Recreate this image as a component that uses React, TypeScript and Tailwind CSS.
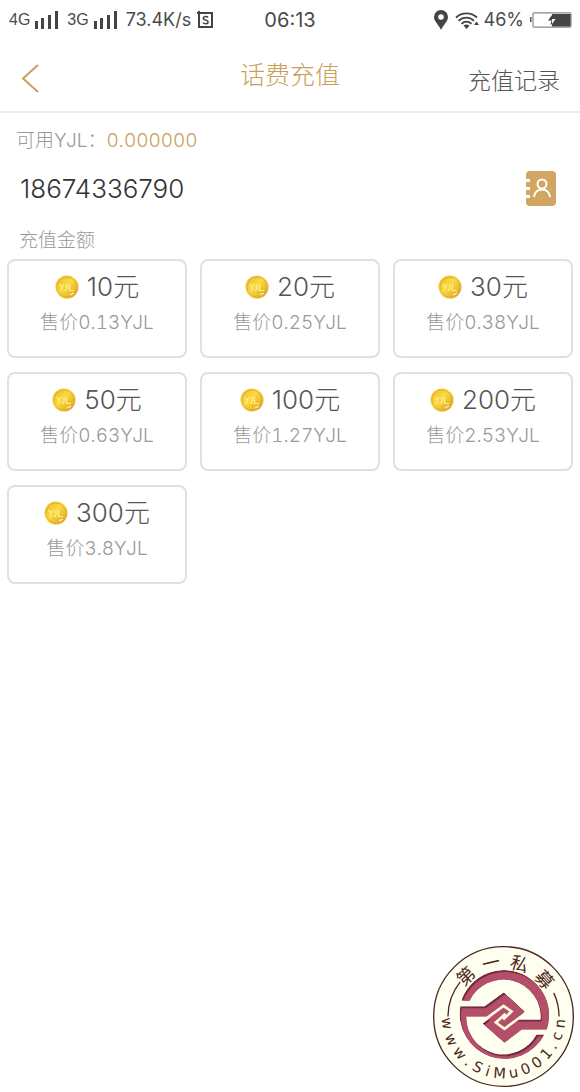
import { useState } from 'react';

const amounts = [
  { value: 10, price: '0.13' },
  { value: 20, price: '0.25' },
  { value: 30, price: '0.38' },
  { value: 50, price: '0.63' },
  { value: 100, price: '1.27' },
  { value: 200, price: '2.53' },
  { value: 300, price: '3.8' },
];

// angle in degrees clockwise from the top of the seal
const sealTop = [
  { char: '第', angle: -43 },
  { char: '一', angle: -13 },
  { char: '私', angle: 17 },
  { char: '募', angle: 48 },
];

// angle in degrees clockwise from the bottom of the seal
const sealBottom = [
  { char: 'w', angle: 83 },
  { char: 'w', angle: 66 },
  { char: 'w', angle: 50 },
  { char: '.', angle: 38 },
  { char: 'S', angle: 27 },
  { char: 'i', angle: 16 },
  { char: 'M', angle: 4 },
  { char: 'u', angle: -10 },
  { char: '0', angle: -23 },
  { char: '0', angle: -36 },
  { char: '1', angle: -49 },
  { char: '.', angle: -59 },
  { char: 'c', angle: -70 },
  { char: 'n', angle: -83 },
];

const SEAL_UPPER =
  'M108 182A135 135 0 0 1 365 268L290 268L238 308L172 250L200 229L250 200L272 238L346 238A112 112 0 0 0 133 182Z';
const SEAL_LOWER =
  'M105 198L178 198L236 156L299 214L255 254L200 229L123 229A112 112 0 0 0 334 283L358 283A135 135 0 0 1 105 198Z';

function Signal() {
  return (
    <svg viewBox="0 0 24 18" className="h-[18px] w-6" fill="#444" aria-hidden="true">
      <rect x="0" y="10" width="3" height="8" />
      <rect x="6" y="7" width="3" height="11" />
      <rect x="13" y="4" width="3" height="14" />
      <rect x="20" y="0" width="3" height="18" />
    </svg>
  );
}

function StatusBar() {
  return (
    <div className="relative flex h-10 items-center justify-between pr-2 pl-[9px] text-lg text-[#4a4a4a]">
      <div className="flex items-center">
        <span className="font-['Liberation_Sans'] text-base">4G</span>
        <span className="ml-[5px]"><Signal /></span>
        <span className="ml-2 font-['Liberation_Sans'] text-base">3G</span>
        <span className="ml-[5px]"><Signal /></span>
        <span className="ml-2">73.4K/s</span>
        <svg viewBox="0 0 17 18" className="ml-1.5 h-[18px] w-[17px]" fill="none" stroke="#444" aria-hidden="true">
          <path d="M0 2H15V16H2V0" strokeWidth="2" />
          <path d="M11 6.500C10 5 6.300 5.100 6.300 7.200C6.300 9.400 11.100 8.600 11.100 11C11.100 13.200 7.100 13.200 6 11.600" strokeWidth="1.600" />
        </svg>
      </div>
      <span className="absolute left-1/2 -translate-x-1/2 text-xl">06:13</span>
      <div className="flex items-center">
        <svg viewBox="0 0 14 20" className="h-5 w-3.5" aria-hidden="true">
          <path d="M7 0A7 7 0 0 0 0 7C0 11.500 5 15 7 20C9 15 14 11.500 14 7A7 7 0 0 0 7 0ZM7 4.200A2.800 2.800 0 1 1 7 9.800A2.800 2.800 0 0 1 7 4.200Z" fill="#444" fillRule="evenodd" />
        </svg>
        <svg viewBox="0 0 25 17" className="ml-[7px] h-[17px] w-[25px]" fill="none" stroke="#444" strokeWidth="1.800" aria-hidden="true">
          <path d="M1 5.500C7 0 16 0 22 5.500M3.500 8.800C8 4.500 15 4.500 19 8.800M6.500 11.800C9.500 9 13.500 9 16.500 11.800" />
          <path d="M8.500 13.500Q11.500 11.500 14.500 13.500L11.500 17ZM19 13L21.500 9.500L24 13Z" fill="#444" stroke="none" />
        </svg>
        <span className="ml-1">46%</span>
        <svg viewBox="0 0 42 16" className="ml-1.5 h-4 w-[42px]" aria-hidden="true">
          <rect x="0" y="5" width="1.500" height="5" fill="#555" />
          <rect x="3" y="0.800" width="38" height="14.400" rx="1.500" fill="#fff" stroke="#888" strokeWidth="1.200" />
          <rect x="22" y="2" width="18.500" height="12.500" fill="#444" />
          <path d="M22 3L18 8.500H21.500L20.500 13L22 12Z" fill="#444" />
          <path d="M22 3.500V7H25.500L22 12Z" fill="#fff" />
        </svg>
      </div>
    </div>
  );
}

function Coin() {
  return (
    <svg viewBox="0 0 24 24" className="h-6 w-6 shrink-0" aria-hidden="true">
      <defs>
        <linearGradient id="coin" x1="0" y1="0" x2="1" y2="1">
          <stop offset="0" stopColor="#eeb52a" />
          <stop offset="0.450" stopColor="#f9da45" />
          <stop offset="1" stopColor="#d99a18" />
        </linearGradient>
      </defs>
      <circle cx="12" cy="12" r="11.500" fill="url(#coin)" />
      <circle cx="12" cy="12" r="10" fill="none" stroke="#e3a92a" strokeWidth="0.800" />
      <path d="M4.500 9L6.800 12L9 9M6.800 12V15.500M12 9V14Q11.500 16 9.500 15M14.500 9V15.500H19" fill="none" stroke="#fff08c" strokeWidth="1.200" />
      <path d="M15 20L19 18" stroke="#fff6b8" strokeWidth="1.200" />
    </svg>
  );
}

function ContactBook() {
  return (
    <svg viewBox="0 0 31 35" className="h-[35px] w-[31px]" aria-hidden="true">
      <rect x="1" width="30" height="35" rx="4" fill="#d2a562" />
      <path d="M0 9.500H5M0 17.500H5M0 25.500H5" stroke="#fff" strokeWidth="3" />
      <circle cx="17" cy="13" r="4.500" fill="none" stroke="#fff" strokeWidth="2" />
      <path d="M9 26C10 16 24 16 25 26" fill="none" stroke="#fff" strokeWidth="2" />
    </svg>
  );
}

function Seal() {
  return (
    <svg viewBox="20 14 430 430" className="h-[143px] w-[143px]" role="img" aria-label="第一私募 www.SiMu001.cn">
      <defs>
        <clipPath id="upper"><path d={SEAL_UPPER} /></clipPath>
        <clipPath id="lower"><path d={SEAL_LOWER} /></clipPath>
      </defs>
      <circle cx="235" cy="229" r="210" fill="#fffff0" stroke="#4a2722" strokeWidth="4" />
      <path d="M68 229A167 167 0 0 1 105 125M402 229A167 167 0 0 0 386 158" fill="none" stroke="#4a2722" strokeWidth="4" />
      <g clipPath="url(#lower)">
        <path d={SEAL_LOWER} fill="#7a2a40" />
        <path d={SEAL_LOWER} fill="#b34f69" transform="translate(4 6)" />
      </g>
      <g clipPath="url(#upper)">
        <path d={SEAL_UPPER} fill="#7a2a40" />
        <path d={SEAL_UPPER} fill="#b34f69" transform="translate(4 6)" />
      </g>
      {/* covers the seam where the two halves overlap */}
      <path d="M200 215L238 172L284 214L236 290L190 250Z" fill="#b34f69" />
      <path d="M186 233L235 197L259 214L234 238M288 229L238 266L212 247L241 221" fill="none" stroke="#fffbdc" strokeWidth="8" />
      <g fill="#4a2722" textAnchor="middle" className="font-['Noto_Sans_CJK_SC',sans-serif] text-[54px]">
        {sealTop.map(({ char, angle }) => (
          <text key={char} x="235" y="83" transform={`rotate(${angle} 235 229)`}>{char}</text>
        ))}
      </g>
      <g fill="#4a2722" textAnchor="middle" className="font-['DejaVu_Sans',sans-serif] text-[44px]">
        {sealBottom.map(({ char, angle }, index) => (
          <text key={index} x="235" y="415" transform={`rotate(${angle} 235 229)`}>{char}</text>
        ))}
      </g>
    </svg>
  );
}

export default function App() {
  const [phone, setPhone] = useState('18674336790');

  return (
    <div className="flex min-h-screen flex-col bg-white font-['Inter','Noto_Sans_CJK_SC',sans-serif]">
      <StatusBar />

      <header className="grid h-[73px] grid-cols-3 items-center border-b-2 border-[#eeeeee] px-5">
        <button type="button" aria-label="返回" className="mt-1 w-5">
          <svg viewBox="0 0 20 30" className="h-[30px] w-5" fill="none" stroke="#c9a05a" strokeWidth="2">
            <path d="M18 2L3 15.500L18 29" />
          </svg>
        </button>
        <h1 className="text-center text-[25px] font-light text-[#c9a05a]">话费充值</h1>
        <a href="#records" className="mt-3 text-right text-[23px] font-light text-[#555]">充值记录</a>
      </header>

      <main className="flex-1 px-[7px] font-light">
        <p className="mt-3 ml-[9px] text-[19px] leading-8 text-[#999] tabular-nums">
          可用YJL：<span className="text-[#c9a05a]">0.000000</span>
        </p>

        <div className="flex h-[62px] items-center justify-between pr-[17px] pl-[13px]">
          <input
            type="tel"
            aria-label="手机号码"
            value={phone}
            onChange={(event) => setPhone(event.target.value)}
            className="w-60 text-[26px] text-[#333] outline-none"
          />
          <button type="button" aria-label="通讯录"><ContactBook /></button>
        </div>

        <h2 className="ml-3 pt-1 text-[19px] leading-9 text-[#999]">充值金额</h2>

        <div className="grid grid-cols-3 gap-x-[13px] gap-y-3.5">
          {amounts.map((amount) => (
            <button
              key={amount.value}
              type="button"
              className="flex h-[99px] flex-col items-center rounded-lg border-2 border-[#e0e0e0] pt-2"
            >
              <span className="flex items-center gap-2 text-[26px] leading-9 text-[#555]">
                <Coin />
                {amount.value}元
              </span>
              <span className="text-[19px] leading-9 text-[#999] tabular-nums">售价{amount.price}YJL</span>
            </button>
          ))}
        </div>
      </main>

      <footer className="flex justify-end pr-[5px] pb-1">
        <Seal />
      </footer>
    </div>
  );
}
